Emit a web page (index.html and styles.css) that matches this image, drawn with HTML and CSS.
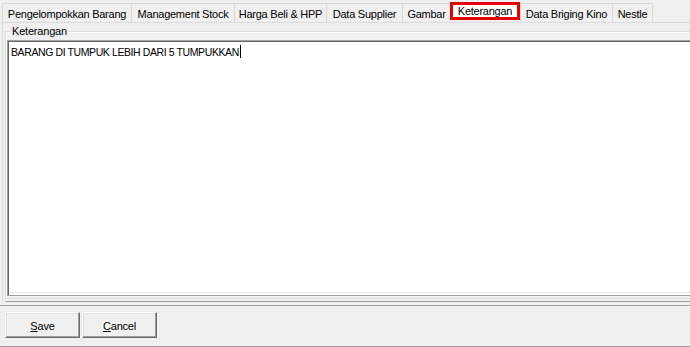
FILE: index.html
```html
<!DOCTYPE html>
<html>
<head>
<meta charset="utf-8">
<link rel="stylesheet" href="styles.css">
</head>
<body>
<div class="tabs">
  <div class="tab t1">Pengelompokkan Barang</div>
  <div class="tab t2">Management Stock</div>
  <div class="tab t3">Harga Beli &amp; HPP</div>
  <div class="tab t4">Data Supplier</div>
  <div class="tab t5">Gambar</div>
  <div class="tab t6 active">Keterangan</div>
  <div class="tab t7">Data Briging Kino</div>
  <div class="tab t8">Nestle</div>
</div>
<div class="page">
  <div class="group">
    <span class="legend">Keterangan</span>
    <div class="memo"><span class="memo-text">BARANG DI TUMPUK LEBIH DARI 5 TUMPUKKAN</span><span class="caret"></span></div>
  </div>
</div>
<div class="bottom">
  <button class="btn"><u>S</u>ave</button>
  <button class="btn"><u>C</u>ancel</button>
</div>
</body>
</html>
```

FILE: styles.css
```css
html, body {
  margin: 0;
  padding: 0;
}
body {
  width: 690px;
  height: 347px;
  overflow: hidden;
  background: #f0f0f0;
  font-family: "Liberation Sans", Arial, sans-serif;
  font-size: 11px;
  color: #000;
}
.tabs {
  display: flex;
  align-items: flex-start;
  padding: 3px 0 0 2px;
  height: 19px;
  box-sizing: content-box;
}
.tab {
  height: 19px;
  box-sizing: border-box;
  border-left: 1px solid #d9d9d9;
  border-top: 1px solid #d9d9d9;
  background: #f0f0f0;
  display: flex;
  align-items: center;
  justify-content: center;
  white-space: nowrap;
  letter-spacing: -0.25px;
  padding-top: 1px;
}
.t1 { width: 129px; }
.t2 { width: 103px; }
.t3 { width: 92px; }
.t4 { width: 76px; }
.t5 { width: 48px; }
.t6 { width: 70px; }
.t7 { width: 92px; }
.t8 { width: 41px; border-right: 1px solid #d9d9d9; }
.tab.active {
  margin-top: -1px;
  height: 18px;
  border: 3px solid #e60000;
  background: #fff;
  padding-top: 0;
}
.page {
  margin-left: 2px;
  height: 281px;
  box-sizing: border-box;
  border-top: 1px solid #dadada;
  border-left: 1px solid #dadada;
  padding: 8px 0 0 2px;
}
.group {
  position: relative;
  height: 271px;
  box-sizing: border-box;
  border: 1px solid #dcdcdc;
  border-right: none;
  border-bottom: 1px solid #a0a0a0;
  box-shadow: inset 1px 1px #fff, inset 0 -2px #f0f0f0, inset 0 -3px #dcdcdc;
  padding: 8px 0 0 1px;
}
.legend {
  position: absolute;
  top: -7px;
  left: 5px;
  padding: 0 1px;
  background: #f0f0f0;
  line-height: 13px;
  letter-spacing: -0.2px;
}
.memo {
  height: 256px;
  box-sizing: border-box;
  background: #fff;
  border-top: 1px solid #a0a0a0;
  border-left: 1px solid #a0a0a0;
  border-bottom: 1px solid #a0a0a0;
  box-shadow: inset 1px 1px #696969, inset 0 -2px #fff, inset 0 -3px #e3e3e3;
  padding: 5px 0 0 3px;
  line-height: 13px;
  display: flex;
  align-items: flex-start;
}
.memo-text {
  font-size: 10.5px;
  letter-spacing: -0.4px;
}
.caret {
  display: inline-block;
  width: 1px;
  height: 13px;
  margin-left: 1px;
  margin-top: -1px;
  background: #000;
}
.bottom {
  margin-top: 2px;
  height: 42px;
  box-sizing: border-box;
  border-top: 1px solid #a0a0a0;
  border-bottom: 1px solid #a0a0a0;
  display: flex;
  gap: 2px;
  padding: 6px 0 0 5px;
}
.btn {
  width: 75px;
  height: 26px;
  box-sizing: border-box;
  margin: 0;
  padding: 1px 0 0 0;
  font: inherit;
  letter-spacing: -0.2px;
  color: #000;
  background: #f0f0f0;
  border-top: 1px solid #fff;
  border-left: 1px solid #fff;
  border-right: 1px solid #696969;
  border-bottom: 1px solid #696969;
  box-shadow: inset -1px -1px #a0a0a0, inset 1px 1px #e3e3e3;
}
.btn u {
  text-decoration: underline;
}
```
